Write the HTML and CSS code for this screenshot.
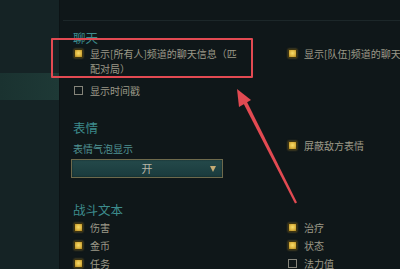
FILE: index.html
```html
<!DOCTYPE html>
<html lang="zh">
<head>
<meta charset="utf-8">
<link rel="stylesheet" href="styles.css">
</head>
<body>
<div class="app">
  <aside class="sidebar"><div class="side-item active"></div></aside>
  <main class="main">
    <div class="topbar"></div>
    <section class="sec sec-chat">
      <h2>聊天</h2>
      <div class="grid grid-chat">
        <div class="opt"><span class="cb on"></span><span class="txt wrap">显示[所有人]频道的聊天信息（匹配对局）</span></div>
        <div class="opt"><span class="cb on"></span><span class="txt">显示[队伍]频道的聊天</span></div>
        <div class="opt"><span class="cb off"></span><span class="txt">显示时间戳</span></div>
      </div>
    </section>
    <section class="sec sec-emote">
      <h2>表情</h2>
      <div class="grid grid-emote">
        <div class="emote-left">
          <div class="field-label">表情气泡显示</div>
          <div class="dropdown"><span></span><span class="dd-value">开</span><span class="dd-arrow"></span></div>
        </div>
        <div class="opt"><span class="cb on"></span><span class="txt">屏蔽敌方表情</span></div>
      </div>
    </section>
    <section class="sec sec-combat">
      <h2>战斗文本</h2>
      <div class="grid grid-combat">
        <div class="opt"><span class="cb on"></span><span class="txt">伤害</span></div>
        <div class="opt"><span class="cb on"></span><span class="txt">治疗</span></div>
        <div class="opt"><span class="cb on"></span><span class="txt">金币</span></div>
        <div class="opt"><span class="cb on"></span><span class="txt">状态</span></div>
        <div class="opt"><span class="cb on"></span><span class="txt">任务</span></div>
        <div class="opt"><span class="cb off"></span><span class="txt">法力值</span></div>
      </div>
    </section>
  </main>
  <div class="annot-box"></div>
  <svg class="annot-arrow" width="400" height="269" viewBox="0 0 400 269">
    <polygon points="237,89 251,100 239,107" fill="#e24a52"/>
    <polygon points="243,102.5 246.5,101 297,202.5 295,203.5" fill="#e24a52"/>
  </svg>
</div>
</body>
</html>
```
FILE: styles.css
```css
html, body {
  margin: 0;
  padding: 0;
  background: #0f1719;
}
body {
  width: 400px;
  height: 269px;
  overflow: hidden;
  font-family: "Noto Sans CJK SC", "Noto Sans", sans-serif;
}
.app {
  position: relative;
  display: flex;
  width: 400px;
  height: 269px;
  overflow: hidden;
}
.sidebar {
  flex: none;
  width: 59px;
  background: #152325;
  border-right: 1px solid #0c1315;
}
.side-item.active {
  margin-top: 73px;
  height: 27px;
  background: linear-gradient(90deg, #1a3230, #1e3936);
}
.main {
  flex: 1;
  min-width: 0;
  padding-left: 13px;
  background: #0f1719;
}
.topbar {
  height: 20px;
  margin-left: -10px;
  border-bottom: 1px solid #1c2729;
}
h2 {
  margin: 0;
  font-size: 12.5px;
  line-height: 14px;
  font-weight: normal;
  color: #3d8c8d;
}
.sec-chat h2 { margin-top: 10px; }
.sec-emote h2 { margin-top: 23px; }
.sec-combat h2 { margin-top: 25px; }

.grid {
  display: grid;
  grid-template-columns: 214px 1fr;
}
.grid-chat { margin-top: 1px; row-gap: 7px; }
.grid-emote { margin-top: 3px; }
.grid-combat { margin-top: 2.5px; row-gap: 3px; }

.opt {
  display: flex;
  align-items: flex-start;
  gap: 7px;
  font-size: 10px;
  line-height: 15px;
  color: #9c9988;
  white-space: nowrap;
}
.txt.wrap {
  white-space: normal;
  width: 150px;
}
.cb {
  flex: none;
  box-sizing: border-box;
  width: 9px;
  height: 9px;
  margin: 3px 0 0 1px;
}
.cb.on {
  background: radial-gradient(circle at 50% 45%, #f7dc6a 0%, #dcb440 55%, #a98320 100%);
  border: 1px solid #3e3410;
  box-shadow: 0 0 2px rgba(214, 172, 60, 0.55);
}
.cb.off {
  border: 1px solid #85847a;
}

.emote-left {
  padding-top: 4px;
}
.field-label {
  font-size: 10px;
  line-height: 14px;
  color: #4f9393;
}
.dropdown {
  box-sizing: border-box;
  width: 152px;
  height: 19px;
  margin: 3px 0 0 -2px;
  border: 1px solid #6e6a4c;
  background: linear-gradient(#24494a, #1a3b3d);
  box-shadow: inset 0 0 2px rgba(0, 0, 0, 0.5);
  display: grid;
  grid-template-columns: 1fr auto 1fr;
  align-items: center;
}
.dd-value {
  font-size: 11px;
  line-height: 17px;
  color: #b7b5a5;
}
.dd-arrow {
  justify-self: end;
  margin-right: 6px;
  width: 0;
  height: 0;
  border-left: 3px solid transparent;
  border-right: 3px solid transparent;
  border-top: 6px solid #c4ab74;
}

.annot-box {
  position: absolute;
  left: 51px;
  top: 38px;
  width: 202px;
  height: 40px;
  box-sizing: border-box;
  border: 2.5px solid #e24a52;
  border-radius: 1px;
}
.annot-arrow {
  position: absolute;
  left: 0;
  top: 0;
  pointer-events: none;
}
```
